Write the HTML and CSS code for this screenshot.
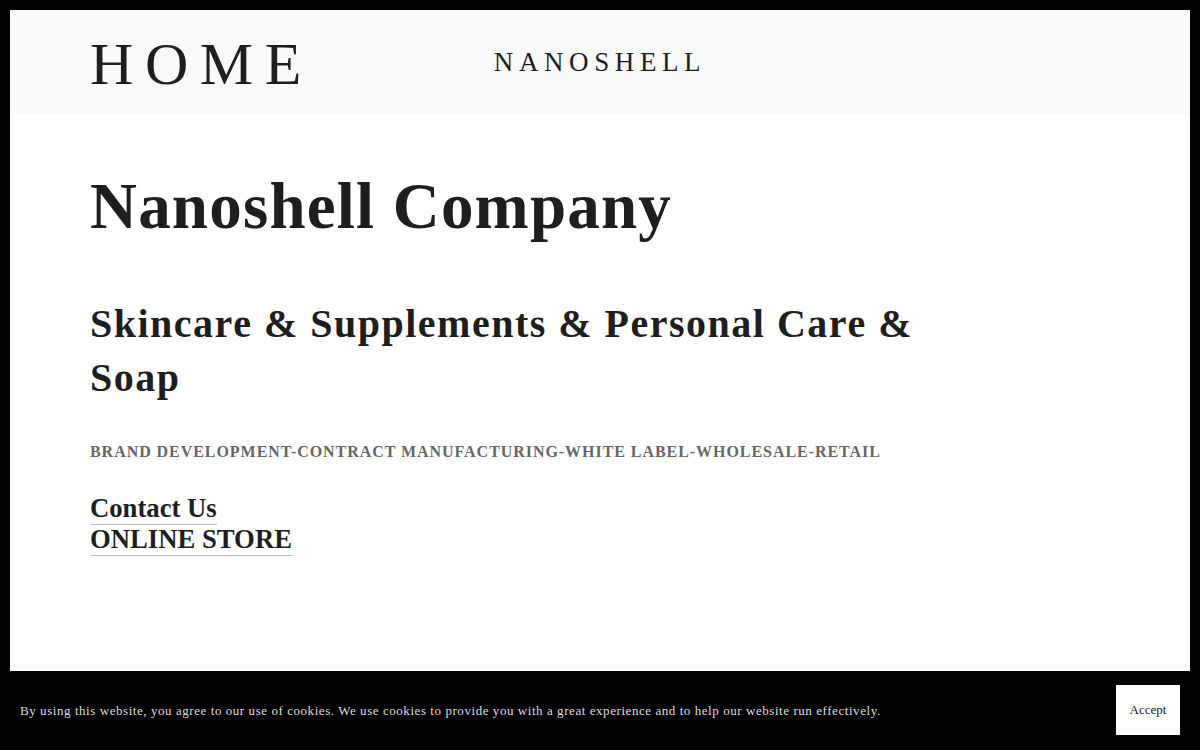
FILE: index.html
```html
<!DOCTYPE html>
<html>
<head>
<meta charset="utf-8">
<title>Nanoshell Company</title>
<link rel="stylesheet" href="styles.css">
</head>
<body>
<div class="page">
  <header class="site-header">
    <a class="home-link" href="#">HOME</a>
    <div class="brand">NANOSHELL</div>
  </header>
  <main class="content">
    <h1 class="title">Nanoshell Company</h1>
    <h2 class="subtitle">Skincare &amp; Supplements &amp; Personal Care &amp; Soap</h2>
    <p class="tagline">BRAND DEVELOPMENT-CONTRACT MANUFACTURING-WHITE LABEL-WHOLESALE-RETAIL</p>
    <div class="links">
      <a class="big-link" href="#">Contact Us</a>
      <a class="big-link" href="#">ONLINE STORE</a>
    </div>
  </main>
</div>
<div class="cookie-bar">
  <p class="cookie-text">By using this website, you agree to our use of cookies. We use cookies to provide you with a great experience and to help our website run effectively.</p>
  <button class="accept">Accept</button>
</div>
</body>
</html>
```

FILE: styles.css
```css
html {
  background: #000;
}
body {
  margin: 0;
  padding: 10px 10px 0 10px;
  background: #000;
  font-family: "Liberation Serif", "Times New Roman", serif;
  color: #1e1e1e;
}
.page {
  background: #fff;
  min-height: 740px;
}
.site-header {
  position: relative;
  height: 105px;
  background: #f9f9f9;
  display: flex;
  align-items: center;
  padding: 0 80px;
}
.home-link {
  font-size: 60px;
  letter-spacing: 11.6px;
  color: #1e1e1e;
  text-decoration: none;
  line-height: 1;
  margin-top: 2px;
}
.brand {
  position: absolute;
  left: 0;
  right: 0;
  top: 39px;
  text-align: center;
  font-size: 27px;
  letter-spacing: 5.6px;
  line-height: 1;
  pointer-events: none;
}
.content {
  padding: 54px 80px 0 80px;
}
.title {
  margin: 0;
  font-size: 65px;
  font-weight: bold;
  letter-spacing: 1.2px;
  line-height: 75px;
}
.subtitle {
  margin: 53px 0 0 0;
  max-width: 860px;
  font-size: 40px;
  font-weight: bold;
  letter-spacing: 1.5px;
  line-height: 54px;
}
.tagline {
  margin: 37px 0 0 0;
  font-size: 16px;
  font-weight: bold;
  letter-spacing: 0.95px;
  color: #666;
  line-height: 20px;
}
.links {
  margin-top: 32px;
  display: flex;
  flex-direction: column;
  align-items: flex-start;
}
.big-link {
  font-size: 26.7px;
  font-weight: bold;
  color: #1e1e1e;
  text-decoration: none;
  line-height: 29px;
  border-bottom: 1px solid #bbb;
  padding-bottom: 1px;
}
.cookie-bar {
  position: fixed;
  left: 0;
  right: 0;
  bottom: 0;
  height: 79px;
  background: #000;
  display: flex;
  align-items: center;
  justify-content: space-between;
  padding: 0 20px;
  box-sizing: border-box;
}
.cookie-text {
  margin: 0;
  color: #ddd;
  font-size: 13px;
  letter-spacing: 0.56px;
}
.accept {
  width: 64px;
  height: 50px;
  margin-top: -1px;
  background: #fff;
  border: none;
  font-family: "Liberation Serif", "Times New Roman", serif;
  font-size: 13px;
  color: #222;
  padding: 0;
}
```
